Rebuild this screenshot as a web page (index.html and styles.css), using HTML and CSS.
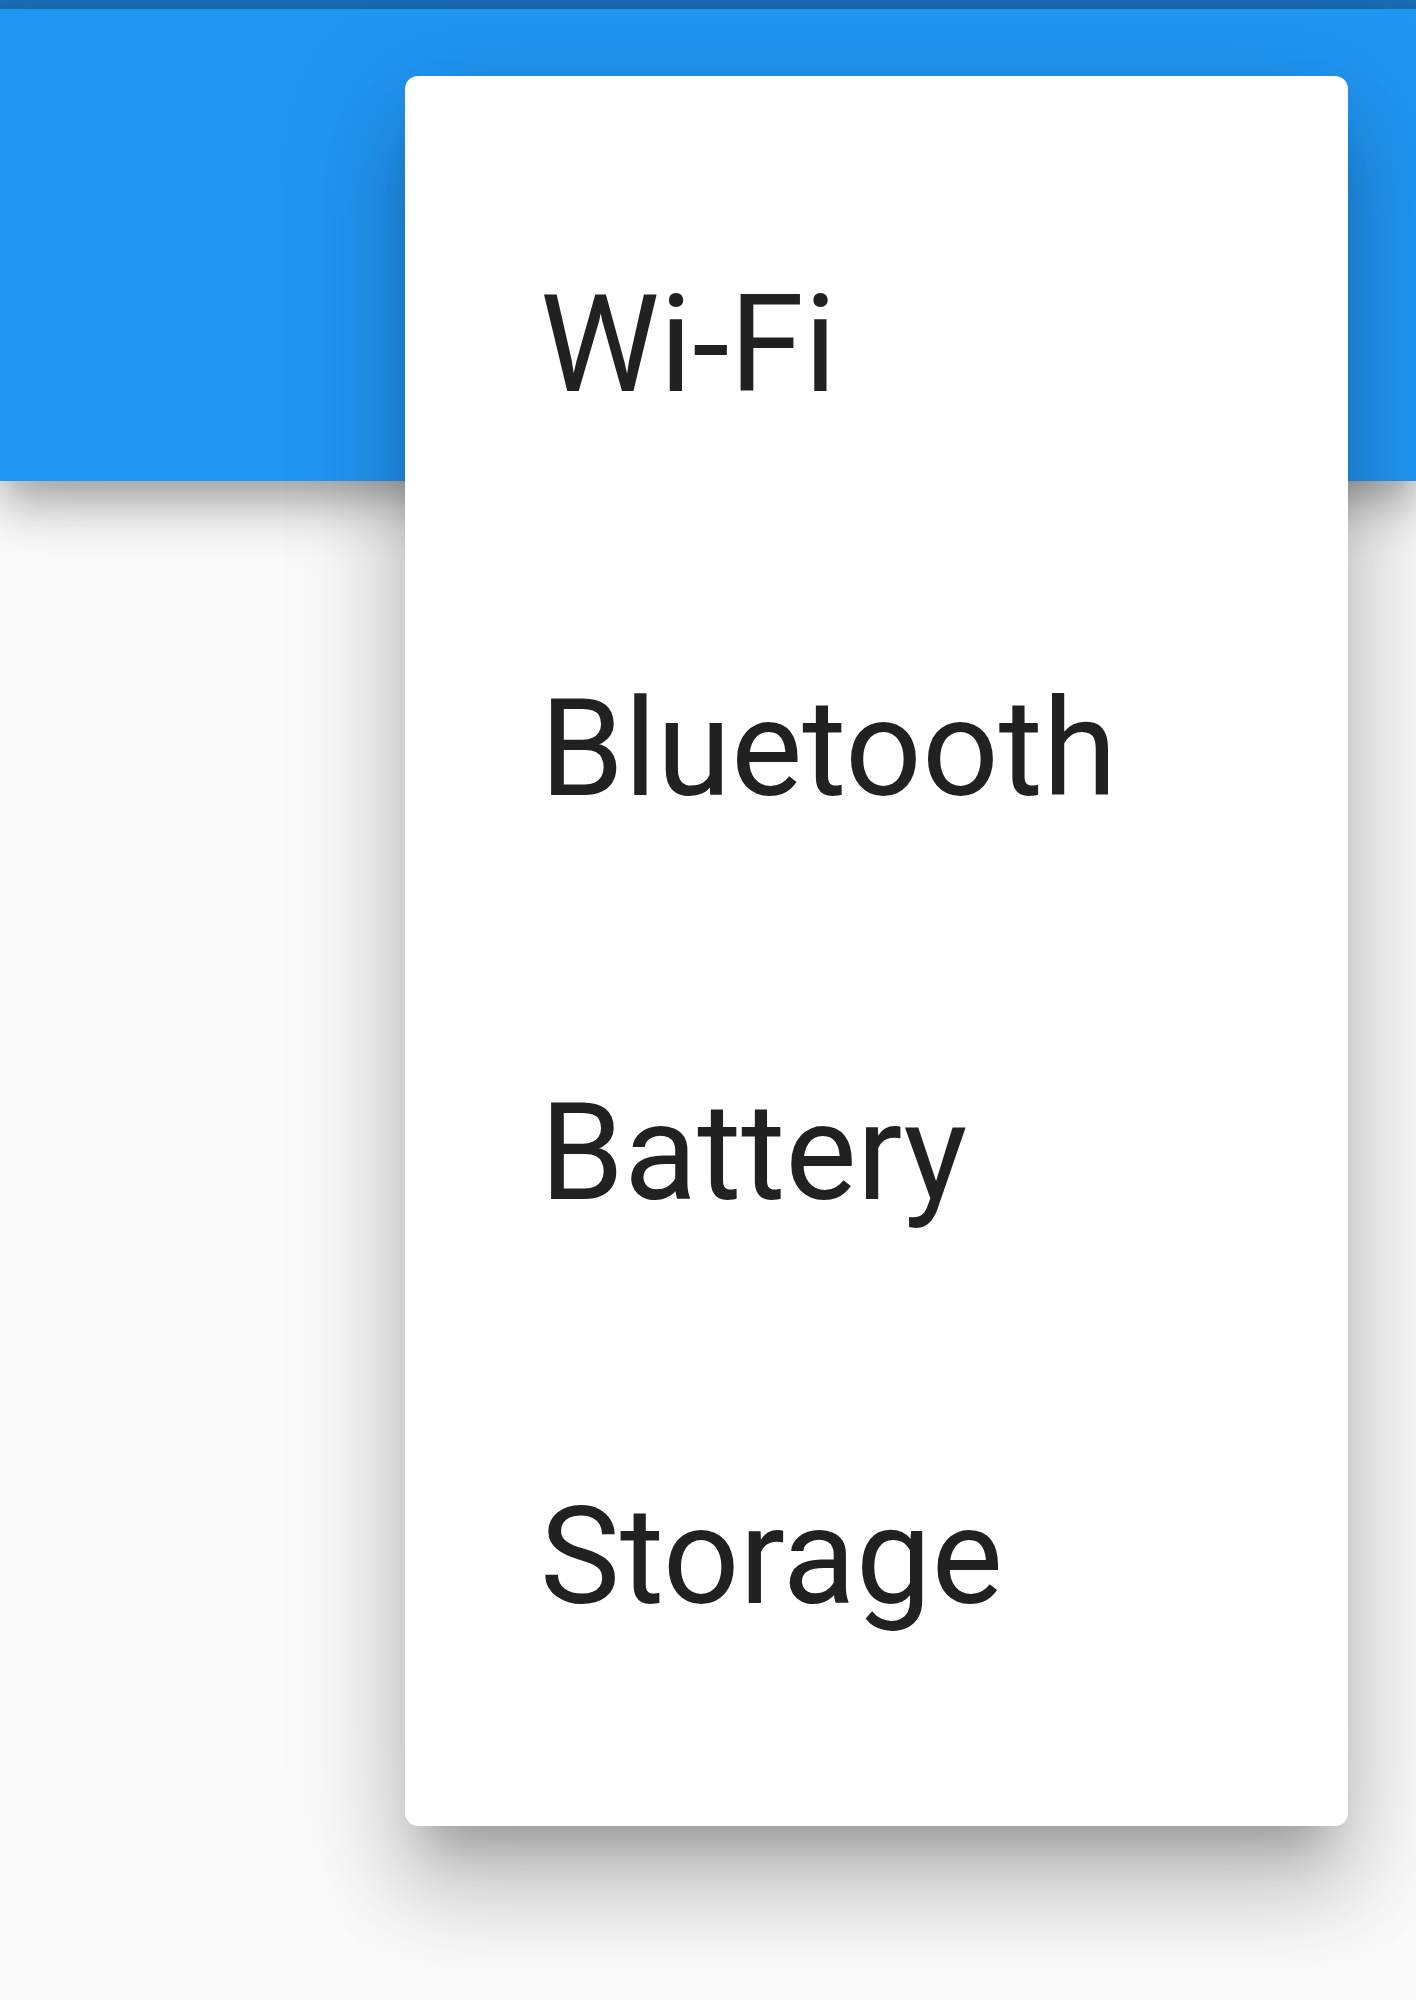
FILE: index.html
```html
<!DOCTYPE html>
<html lang="en">
<head>
  <meta charset="UTF-8" />
  <meta name="viewport" content="width=device-width, initial-scale=1.0"/>
  <title>Settings</title>
  <link rel="stylesheet" href="styles.css">
</head>
<body>
  <div class="status-bar"></div>
  <header class="app-bar"></header>

  <main class="content"></main>

  <ul class="popup-menu">
    <li class="menu-item">Wi-Fi</li>
    <li class="menu-item">Bluetooth</li>
    <li class="menu-item">Battery</li>
    <li class="menu-item">Storage</li>
  </ul>
</body>
</html>
```

FILE: styles.css
```css
html, body {
  height: 100%;
}
body {
  font-family: Roboto, "Noto Sans", sans-serif;
  background: #fafafa;
  margin: 0;
  position: relative;
  overflow: hidden;
}
.status-bar {
  height: 9px;
  background: #1b6fb7;
}
.app-bar {
  height: 472px;
  background: #2196f3;
  box-shadow: 0 17px 34px -8px rgba(0, 0, 0, 0.2),
              0 34px 42px 0 rgba(0, 0, 0, 0.14),
              0 8px 84px 0 rgba(0, 0, 0, 0.12);
  position: relative;
  z-index: 1;
}
.popup-menu {
  position: absolute;
  top: 76px;
  right: 68px;
  width: 943px;
  list-style: none;
  margin: 0;
  padding: 67px 0;
  background: #fff;
  border-radius: 13px;
  box-shadow: 0 42px 42px -25px rgba(0, 0, 0, 0.2),
              0 67px 84px 8px rgba(0, 0, 0, 0.14),
              0 25px 118px 17px rgba(0, 0, 0, 0.12);
  z-index: 2;
}
.menu-item {
  height: 404px;
  line-height: 404px;
  padding: 0 135px;
  font-size: 134.7px;
  color: #212121;
}
```
